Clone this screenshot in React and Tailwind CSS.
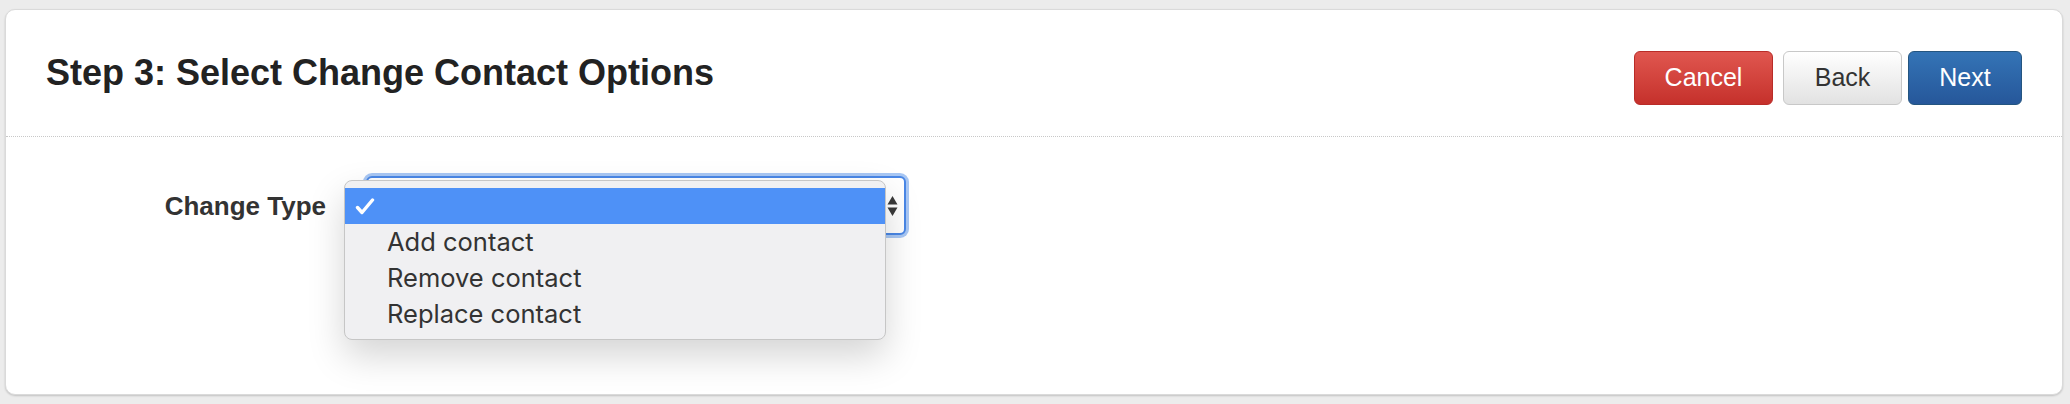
export default function App() {
  const options = ['Add contact', 'Remove contact', 'Replace contact'];

  return (
    <div className="h-[404px] bg-[#ececec] pl-[5px] pr-[7px] pt-[9px] font-['Liberation_Sans',Arial,sans-serif]">
      <div className="h-[386px] rounded-[10px] border border-[#dadada] bg-white shadow-[0_1px_2px_rgba(0,0,0,0.18)]">
        <div className="flex h-[127px] items-start justify-between border-b border-dotted border-[#c8c8c8] pl-[40px] pr-[40px] pt-[41px]">
          <h3 className="mt-[2px] text-[36px] font-bold leading-[40px] text-[#222]">
            Step 3: Select Change Contact Options
          </h3>
          <div className="flex items-center">
            <button className="h-[54px] w-[139px] rounded-[6px] border border-[#b92c28] bg-linear-to-b from-[#e0564f] to-[#c5302b] text-[25px] text-white">
              Cancel
            </button>
            <button className="ml-[10px] h-[54px] w-[119px] rounded-[6px] border border-[#c8c8c8] bg-linear-to-b from-white to-[#e2e2e2] text-[25px] text-[#333]">
              Back
            </button>
            <button className="ml-[6px] h-[54px] w-[114px] rounded-[6px] border border-[#245580] bg-linear-to-b from-[#3474b6] to-[#26579a] text-[25px] text-white">
              Next
            </button>
          </div>
        </div>

        <div className="flex items-center pt-[36px]">
          <label className="w-[320px] text-right text-[26px] font-bold leading-[30px] text-[#333]">
            Change Type
          </label>
          <div className="relative ml-[37px] w-[546px]">
            <div className="h-[65px] rounded-[9px] bg-[#a8c7f4] p-[3px]">
              <div className="flex h-full items-center justify-end rounded-[6px] border-2 border-[#4a87e6] bg-white pr-[6px]">
                <svg width="11" height="22" viewBox="0 0 11 22">
                  <path d="M5.5 1 L10.5 9.5 H0.5 Z" fill="#3a3a3a" />
                  <path d="M5.5 21 L10.5 12.5 H0.5 Z" fill="#3a3a3a" />
                </svg>
              </div>
            </div>

            <div className="absolute left-[-19px] top-[7px] w-[542px] rounded-[8px] border border-[#c6c6c6] bg-[#f0f0f2] pb-[7px] pt-[7px] font-['Inter',sans-serif] shadow-[0_16px_36px_rgba(0,0,0,0.17)]">
              <div className="flex h-[36px] items-center bg-[#4e91f7] pl-[10px]">
                <svg width="20" height="17" viewBox="0 0 20 17">
                  <path d="M2.5 9.5 L7 14.5 L17.5 2" fill="none" stroke="white" strokeWidth="3.4" strokeLinecap="round" strokeLinejoin="round" />
                </svg>
              </div>
              {options.map((opt) => (
                <div key={opt} className="flex h-[36px] items-center pl-[42px] text-[25.5px] text-[#333]">
                  {opt}
                </div>
              ))}
            </div>
          </div>
        </div>
      </div>
    </div>
  );
}
